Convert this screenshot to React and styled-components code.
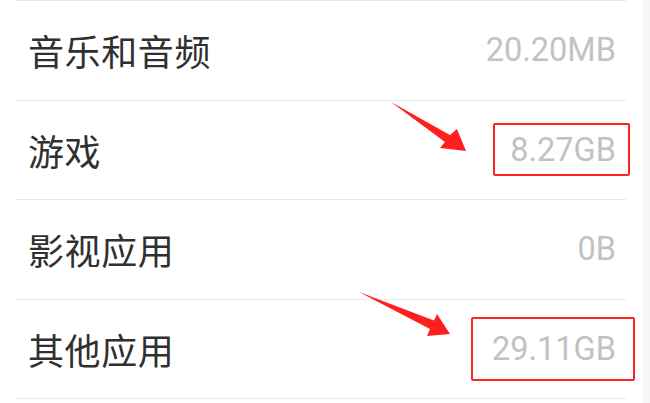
import styled, { createGlobalStyle } from "styled-components";

const GlobalStyle = createGlobalStyle`
  html, body {
    margin: 0;
    padding: 0;
    background: #ffffff;
  }
  body {
    font-family: "Noto Sans CJK SC", "Noto Sans", sans-serif;
  }
`;

const Screen = styled.div`
  display: flex;
  width: 650px;
  height: 403px;
  overflow: hidden;
  position: relative;
`;

const List = styled.div`
  flex: 1;
  display: flex;
  flex-direction: column;
  padding: 0 17px 0 15px;
`;

const Row = styled.div`
  display: flex;
  align-items: center;
  justify-content: space-between;
  height: 98.5px;
  padding: 0 10px 0 13px;
  border-bottom: 1px solid #e8e8e8;
  &:first-child {
    border-top: 1px solid #e8e8e8;
  }
`;

const Label = styled.span`
  font-size: 36px;
  color: #303030;
  letter-spacing: 0.6px;
  line-height: 1;
`;

const Value = styled.span`
  position: relative;
  font-family: Roboto, "Noto Sans", sans-serif;
  font-size: 32.5px;
  color: #c2c2c2;
  line-height: 1;
`;

const Mark = styled.span`
  position: absolute;
  top: ${({ $t }) => $t}px;
  bottom: ${({ $b }) => $b}px;
  left: ${({ $l }) => $l}px;
  right: ${({ $r }) => $r}px;
  border: 2px solid #ff2424;
  border-radius: 2px;
`;

const SideStrip = styled.div`
  width: 7px;
  background: #f6f6f6;
`;

const Arrow = styled.svg`
  position: absolute;
  left: 0;
  top: 0;
  pointer-events: none;
`;

const rows = [
  { name: "音乐和音频", size: "20.20MB" },
  { name: "游戏", size: "8.27GB", mark: { t: -11, b: -10, l: -17, r: -14 } },
  { name: "影视应用", size: "0B" },
  { name: "其他应用", size: "29.11GB", mark: { t: -16, b: -16, l: -21, r: -19 } },
];

export default function App() {
  return (
    <>
      <GlobalStyle />
      <Screen>
        <List>
          {rows.map((r) => (
            <Row key={r.name}>
              <Label>{r.name}</Label>
              <Value>
                {r.size}
                {r.mark && (
                  <Mark $t={r.mark.t} $b={r.mark.b} $l={r.mark.l} $r={r.mark.r} />
                )}
              </Value>
            </Row>
          ))}
        </List>
        <SideStrip />
        <Arrow width="650" height="403" viewBox="0 0 650 403">
          <polygon
            fill="#ff1f1f"
            points="391,102 450,135 457,129 466,151 440,148 445,142"
          />
          <polygon
            fill="#ff1f1f"
            points="359,292 434,320.5 437,314 450,334 427,336 430,329"
          />
        </Arrow>
      </Screen>
    </>
  );
}
